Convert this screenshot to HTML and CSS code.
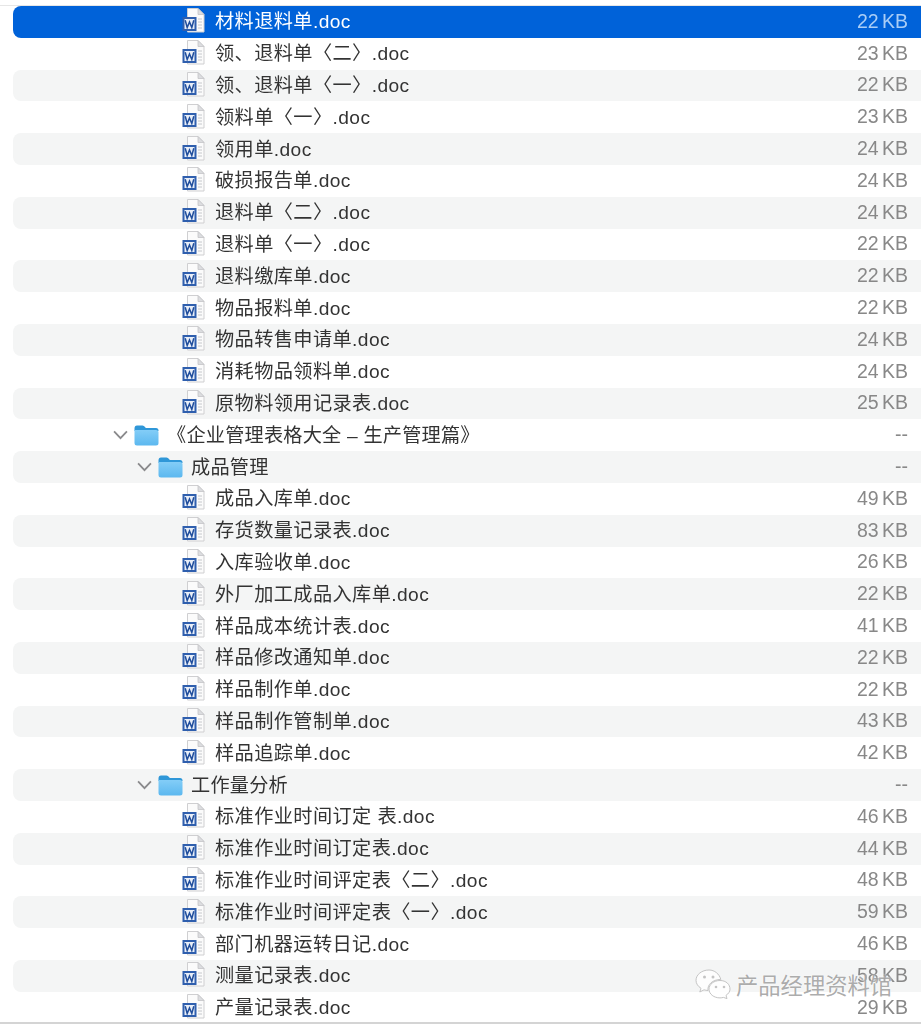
FILE: index.html
```html
<!DOCTYPE html>
<html lang="zh">
<head>
  <meta charset="UTF-8" />
  <meta name="viewport" content="width=device-width, initial-scale=1.0"/>
  <title>企业管理表格大全</title>
  <link rel="stylesheet" href="styles.css">
</head>
<body>

  <svg class="sprites" width="0" height="0">
    <symbol id="doc" viewBox="0 0 24 26">
      <path d="M6.5 1.5H17L23 7.5V25H6.5Z" fill="#fbfbfb" stroke="#cfcfd1" stroke-width="1"/>
      <path d="M17 1.5V7.5H23Z" fill="#dcdde0" stroke="#c4c4c7" stroke-width="0.8"/>
      <path d="M17 12H21M17 15H21M17 18H21M17 21H21" stroke="#c6c8cc" stroke-width="1"/>
      <rect x="1.5" y="10" width="14" height="14" fill="#2f5fae"/>
      <rect x="3.5" y="12" width="10" height="10" fill="#e8eef8"/>
      <path d="M4.2 13.2L6.2 20.5L8.5 15L10.8 20.5L12.8 13.2" fill="none" stroke="#1f4d9c" stroke-width="1.5"/>
    </symbol>
    <symbol id="folder" viewBox="0 0 25 21">
      <path d="M0.5 3.5Q0.5 0.5 3 0.5H8.5Q10 0.5 11 2L11.8 3H22Q24.5 3 24.5 5.5V6H0.5Z" fill="#2f97d8"/>
      <path d="M0.5 5H22Q24.5 5 24.5 7.5V18Q24.5 20.5 22 20.5H3Q0.5 20.5 0.5 18Z" fill="url(#folderFill)"/>
    </symbol>
    <symbol id="chevron" viewBox="0 0 14 9">
      <path d="M1 1.2L7 7.4L13 1.2" fill="none" stroke="#8a8a8c" stroke-width="1.7"/>
    </symbol>
    <linearGradient id="folderFill" x1="0" y1="0" x2="0" y2="1">
      <stop offset="0" stop-color="#83cdf7"/>
      <stop offset="1" stop-color="#5cb8ef"/>
    </linearGradient>
  </svg>

  <div class="file-list">
    <div class="row file selected"><svg class="doc-icon"><use href="#doc"/></svg><span class="name">材料退料单.doc</span><span class="size">22 KB</span></div>
    <div class="row file"><svg class="doc-icon"><use href="#doc"/></svg><span class="name">领、退料单〈二〉.doc</span><span class="size">23 KB</span></div>
    <div class="row file"><svg class="doc-icon"><use href="#doc"/></svg><span class="name">领、退料单〈一〉.doc</span><span class="size">22 KB</span></div>
    <div class="row file"><svg class="doc-icon"><use href="#doc"/></svg><span class="name">领料单〈一〉.doc</span><span class="size">23 KB</span></div>
    <div class="row file"><svg class="doc-icon"><use href="#doc"/></svg><span class="name">领用单.doc</span><span class="size">24 KB</span></div>
    <div class="row file"><svg class="doc-icon"><use href="#doc"/></svg><span class="name">破损报告单.doc</span><span class="size">24 KB</span></div>
    <div class="row file"><svg class="doc-icon"><use href="#doc"/></svg><span class="name">退料单〈二〉.doc</span><span class="size">24 KB</span></div>
    <div class="row file"><svg class="doc-icon"><use href="#doc"/></svg><span class="name">退料单〈一〉.doc</span><span class="size">22 KB</span></div>
    <div class="row file"><svg class="doc-icon"><use href="#doc"/></svg><span class="name">退料缴库单.doc</span><span class="size">22 KB</span></div>
    <div class="row file"><svg class="doc-icon"><use href="#doc"/></svg><span class="name">物品报料单.doc</span><span class="size">22 KB</span></div>
    <div class="row file"><svg class="doc-icon"><use href="#doc"/></svg><span class="name">物品转售申请单.doc</span><span class="size">24 KB</span></div>
    <div class="row file"><svg class="doc-icon"><use href="#doc"/></svg><span class="name">消耗物品领料单.doc</span><span class="size">24 KB</span></div>
    <div class="row file"><svg class="doc-icon"><use href="#doc"/></svg><span class="name">原物料领用记录表.doc</span><span class="size">25 KB</span></div>

    <div class="row folder top-folder"><svg class="chevron"><use href="#chevron"/></svg><svg class="folder-icon"><use href="#folder"/></svg><span class="name">《企业管理表格大全 – 生产管理篇》</span><span class="size">--</span></div>

    <div class="row folder sub-folder"><svg class="chevron"><use href="#chevron"/></svg><svg class="folder-icon"><use href="#folder"/></svg><span class="name">成品管理</span><span class="size">--</span></div>
    <div class="row file"><svg class="doc-icon"><use href="#doc"/></svg><span class="name">成品入库单.doc</span><span class="size">49 KB</span></div>
    <div class="row file"><svg class="doc-icon"><use href="#doc"/></svg><span class="name">存货数量记录表.doc</span><span class="size">83 KB</span></div>
    <div class="row file"><svg class="doc-icon"><use href="#doc"/></svg><span class="name">入库验收单.doc</span><span class="size">26 KB</span></div>
    <div class="row file"><svg class="doc-icon"><use href="#doc"/></svg><span class="name">外厂加工成品入库单.doc</span><span class="size">22 KB</span></div>
    <div class="row file"><svg class="doc-icon"><use href="#doc"/></svg><span class="name">样品成本统计表.doc</span><span class="size">41 KB</span></div>
    <div class="row file"><svg class="doc-icon"><use href="#doc"/></svg><span class="name">样品修改通知单.doc</span><span class="size">22 KB</span></div>
    <div class="row file"><svg class="doc-icon"><use href="#doc"/></svg><span class="name">样品制作单.doc</span><span class="size">22 KB</span></div>
    <div class="row file"><svg class="doc-icon"><use href="#doc"/></svg><span class="name">样品制作管制单.doc</span><span class="size">43 KB</span></div>
    <div class="row file"><svg class="doc-icon"><use href="#doc"/></svg><span class="name">样品追踪单.doc</span><span class="size">42 KB</span></div>

    <div class="row folder sub-folder"><svg class="chevron"><use href="#chevron"/></svg><svg class="folder-icon"><use href="#folder"/></svg><span class="name">工作量分析</span><span class="size">--</span></div>
    <div class="row file"><svg class="doc-icon"><use href="#doc"/></svg><span class="name">标准作业时间订定 表.doc</span><span class="size">46 KB</span></div>
    <div class="row file"><svg class="doc-icon"><use href="#doc"/></svg><span class="name">标准作业时间订定表.doc</span><span class="size">44 KB</span></div>
    <div class="row file"><svg class="doc-icon"><use href="#doc"/></svg><span class="name">标准作业时间评定表〈二〉.doc</span><span class="size">48 KB</span></div>
    <div class="row file"><svg class="doc-icon"><use href="#doc"/></svg><span class="name">标准作业时间评定表〈一〉.doc</span><span class="size">59 KB</span></div>
    <div class="row file"><svg class="doc-icon"><use href="#doc"/></svg><span class="name">部门机器运转日记.doc</span><span class="size">46 KB</span></div>
    <div class="row file"><svg class="doc-icon"><use href="#doc"/></svg><span class="name">测量记录表.doc</span><span class="size">58 KB</span></div>
    <div class="row file"><svg class="doc-icon"><use href="#doc"/></svg><span class="name">产量记录表.doc</span><span class="size">29 KB</span></div>
  </div>

  <!-- 水印 -->
  <div class="watermark">
    <svg class="wechat" viewBox="0 0 36 30">
      <path d="M14 1C6.8 1 1 5.6 1 11.3C1 14.6 3 17.4 6 19.3L4.8 23L9 20.8C10.4 21.2 11.6 21.4 13 21.5C12.2 15.5 17.6 10.6 25.8 10.4C24.4 5 19.6 1 14 1Z" fill="#fff" fill-opacity="0.8" stroke="#c4c4c4" stroke-width="1"/>
      <path d="M25 11.5C18.8 11.5 14 15.4 14 20.2C14 25 18.8 28.9 25 28.9C26.2 28.9 27.4 28.7 28.4 28.4L32 29.6L31 26.4C33.4 24.8 35 22.6 35 20.2C35 15.4 31.2 11.5 25 11.5Z" fill="#fff" fill-opacity="0.85" stroke="#c4c4c4" stroke-width="1"/>
      <circle cx="9.5" cy="8" r="1.5" fill="#c4c4c4"/>
      <circle cx="18" cy="8" r="1.5" fill="#c4c4c4"/>
      <circle cx="21" cy="18" r="1.3" fill="#c4c4c4"/>
      <circle cx="29" cy="18" r="1.3" fill="#c4c4c4"/>
    </svg>
    <span class="watermark-text">产品经理资料馆</span>
  </div>

</body>
</html>
```

FILE: styles.css
```css
body, html {
  height: 100%;
  margin: 0;
  background-color: #fff;
  font-family: "Liberation Sans", "Noto Sans CJK SC", sans-serif;
  overflow: hidden;
}

.sprites {
  position: absolute;
}

.file-list {
  height: 1019px;
  margin-top: 5px;
  padding-left: 13px;
  box-sizing: border-box;
  border-top: 1px solid #e6e6e6;
  border-bottom: 2px solid #d4d4d4;
  display: grid;
  grid-auto-rows: 31.81px;
  align-content: start;
  overflow: hidden;
  filter: blur(0.4px);
}

.row {
  display: flex;
  align-items: center;
  border-radius: 8px 0 0 8px;
  font-size: 19.2px;
  color: #333;
}

.row:nth-child(odd) {
  background-color: #f4f5f5;
}

.file {
  padding-left: 168px;
}

.top-folder {
  padding-left: 100px;
}

.sub-folder {
  padding-left: 124px;
}

.doc-icon {
  width: 24px;
  height: 26px;
  margin-right: 10px;
  margin-bottom: 3px;
  flex: none;
}

.chevron {
  width: 15px;
  height: 10px;
  margin-right: 6px;
  flex: none;
}

.folder-icon {
  width: 25px;
  height: 21px;
  margin-right: 8px;
  flex: none;
}

.name {
  flex: 1;
  padding-bottom: 3px;
  white-space: pre;
  letter-spacing: 0.4px;
}

.folder .name {
  letter-spacing: 0.2px;
}

.size {
  padding-right: 13px;
  padding-bottom: 1px;
  color: #888;
  font-size: 19.5px;
  word-spacing: -2px;
}

.selected {
  color: #fff;
}

.row.selected {
  background-color: #0062d9;
}

.selected .size {
  color: #a9cdf6;
}

.watermark {
  position: absolute;
  left: 695px;
  top: 968px;
  display: flex;
  align-items: center;
  gap: 5px;
}

.wechat {
  width: 36px;
  height: 30px;
}

.watermark-text {
  font-family: "Noto Sans CJK SC", sans-serif;
  font-size: 22.3px;
  color: rgba(150, 150, 150, 0.8);
  text-shadow: 0 0 2px #fff;
}
```
